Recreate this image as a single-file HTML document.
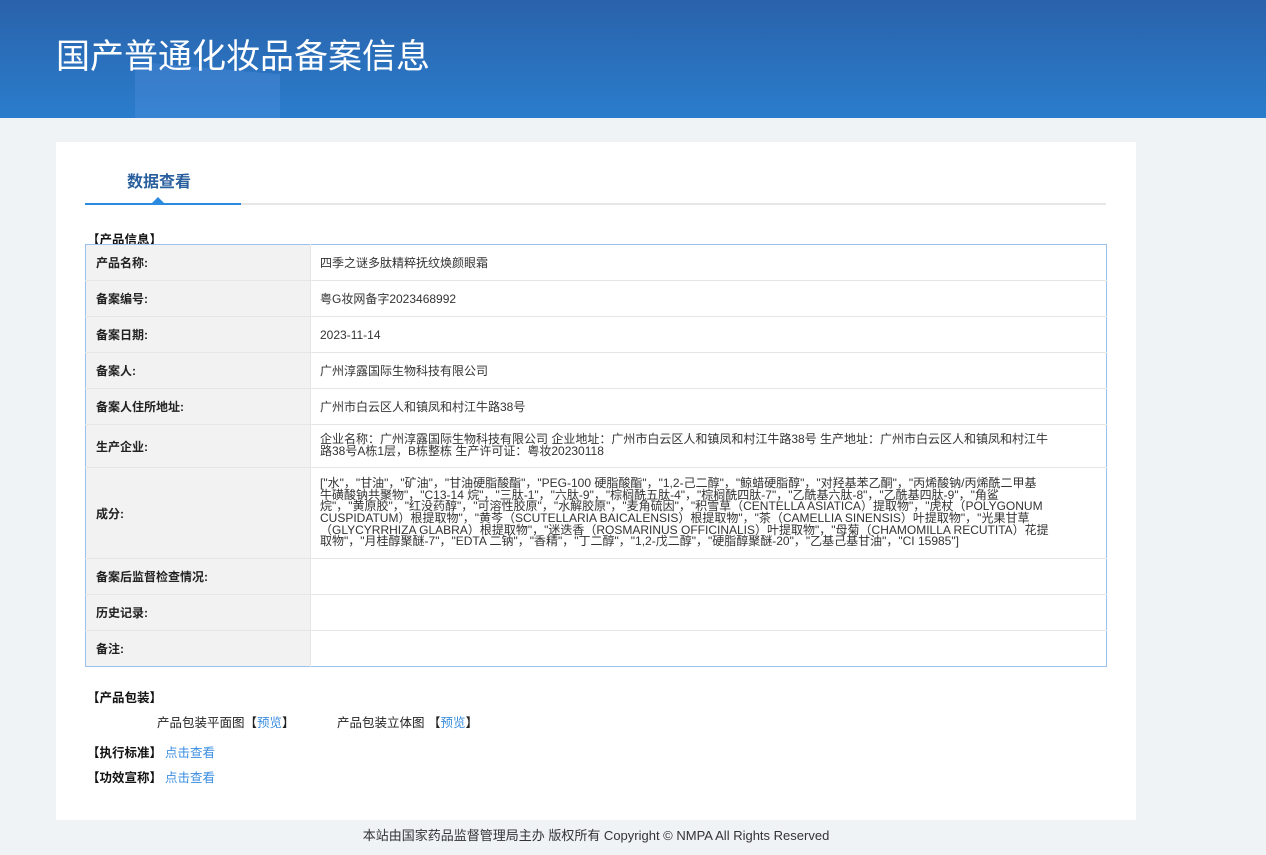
<!DOCTYPE html>
<html><head><meta charset="utf-8"><style>
*{margin:0;padding:0;box-sizing:border-box}
body{width:1266px;height:855px;background:#eff3f6;font-family:"Liberation Sans","Noto Sans CJK SC",sans-serif;color:#333;position:relative;overflow:hidden}
.hd{position:absolute;left:0;top:0;width:1266px;height:118px;background:linear-gradient(180deg,#2a62ab 0%,#2a7dcc 100%);overflow:hidden}
.hd .s1{position:absolute;left:135px;top:68px;width:145px;height:60px;background:rgba(90,150,230,.3);transform:skewY(5deg)}
.hd h1{position:absolute;left:56px;top:29px;font-size:34px;font-weight:normal;color:#fff}
.card{position:absolute;left:56px;top:142px;width:1080px;height:678px;background:#fff}
.tab{position:absolute;left:71px;top:26px;font-size:16px;font-weight:bold;color:#2a5f9e}
.tl{position:absolute;left:29px;top:61px;width:1021px;height:2px;background:#e6e6e6}
.tb{position:absolute;left:29px;top:61px;width:156px;height:2px;background:#2a8ae0}
.tri{position:absolute;left:96px;top:55px;width:0;height:0;border-left:6px solid transparent;border-right:6px solid transparent;border-bottom:6px solid #2a8ae0}
.sec{position:absolute;font-size:12.5px;font-weight:bold;color:#111}
table{position:absolute;left:29px;top:102px;width:1022px;border-collapse:collapse;border:1px solid #9ec0f0;font-size:12px}
td{border-bottom:1px solid #e6e6e6;height:36px;vertical-align:middle}
td.l{width:225px;background:#f2f2f2;font-weight:bold;padding-left:10px;color:#222;border-right:1px solid #e6e6e6}
td.v{padding-left:9px;color:#333;font-size:12px}
.ml{line-height:11.6px}
.t{position:absolute;font-size:12.5px;color:#222}
a{color:#3a8ee0;text-decoration:none}
.ft{position:absolute;top:825px;left:0;width:1192px;text-align:center;font-size:13px;color:#333}
</style></head><body>
<div class="hd"><div class="s1"></div><h1>国产普通化妆品备案信息</h1></div>
<div class="card">
<div class="tab">数据查看</div>
<div class="tl"></div><div class="tb"></div><div class="tri"></div>
<div class="sec" style="left:31px;top:87px">【产品信息】</div>
<table>
<tr><td class="l">产品名称:</td><td class="v">四季之谜多肽精粹抚纹焕颜眼霜</td></tr>
<tr><td class="l">备案编号:</td><td class="v">粤G妆网备字2023468992</td></tr>
<tr><td class="l">备案日期:</td><td class="v">2023-11-14</td></tr>
<tr><td class="l">备案人:</td><td class="v">广州淳露国际生物科技有限公司</td></tr>
<tr><td class="l">备案人住所地址:</td><td class="v">广州市白云区人和镇凤和村江牛路38号</td></tr>
<tr><td class="l" style="height:43px">生产企业:</td><td class="v ml">企业名称：广州淳露国际生物科技有限公司 企业地址：广州市白云区人和镇凤和村江牛路38号 生产地址：广州市白云区人和镇凤和村江牛<br>路38号A栋1层，B栋整栋 生产许可证：粤妆20230118</td></tr>
<tr><td class="l" style="height:91px">成分:</td><td class="v ml">["水"，"甘油"，"矿油"，"甘油硬脂酸酯"，"PEG-100 硬脂酸酯"，"1,2-己二醇"，"鲸蜡硬脂醇"，"对羟基苯乙酮"，"丙烯酸钠/丙烯酰二甲基<br>牛磺酸钠共聚物"，"C13-14 烷"，"三肽-1"，"六肽-9"，"棕榈酰五肽-4"，"棕榈酰四肽-7"，"乙酰基六肽-8"，"乙酰基四肽-9"，"角鲨<br>烷"，"黄原胶"，"红没药醇"，"可溶性胶原"，"水解胶原"，"麦角硫因"，"积雪草（CENTELLA ASIATICA）提取物"，"虎杖（POLYGONUM<br>CUSPIDATUM）根提取物"，"黄芩（SCUTELLARIA BAICALENSIS）根提取物"，"茶（CAMELLIA SINENSIS）叶提取物"，"光果甘草<br>（GLYCYRRHIZA GLABRA）根提取物"，"迷迭香（ROSMARINUS OFFICINALIS）叶提取物"，"母菊（CHAMOMILLA RECUTITA）花提<br>取物"，"月桂醇聚醚-7"，"EDTA 二钠"，"香精"，"丁二醇"，"1,2-戊二醇"，"硬脂醇聚醚-20"，"乙基己基甘油"，"CI 15985"]</td></tr>
<tr><td class="l">备案后监督检查情况:</td><td class="v"></td></tr>
<tr><td class="l">历史记录:</td><td class="v"></td></tr>
<tr><td class="l" style="border-bottom:none">备注:</td><td class="v" style="border-bottom:none"></td></tr>
</table>
<div class="sec" style="left:31px;top:545px">【产品包装】</div>
<div class="t" style="left:101px;top:570px">产品包装平面图【<a>预览</a>】</div>
<div class="t" style="left:281px;top:570px">产品包装立体图 【<a>预览</a>】</div>
<div class="sec" style="left:31px;top:600px">【执行标准】</div><div class="t" style="left:109px;top:600px"><a>点击查看</a></div>
<div class="sec" style="left:31px;top:625px">【功效宣称】</div><div class="t" style="left:109px;top:625px"><a>点击查看</a></div>
</div>
<div class="ft">本站由国家药品监督管理局主办 版权所有 Copyright © NMPA All Rights Reserved</div>
</body></html>
